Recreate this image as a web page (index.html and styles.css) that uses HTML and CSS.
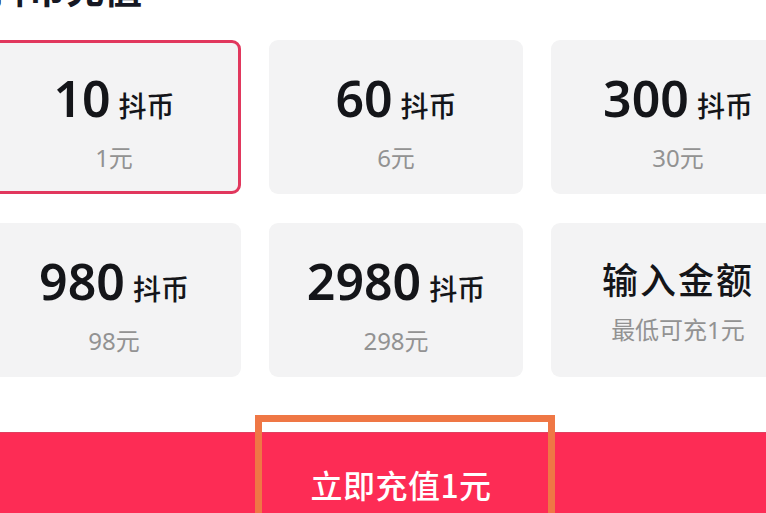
FILE: index.html
```html
<!DOCTYPE html>
<html lang="zh-CN">
<head>
<meta charset="utf-8">
<title>抖币充值</title>
<link rel="stylesheet" href="styles.css">
</head>
<body>
<div class="page">
  <h1 class="title">抖币充值</h1>
  <div class="grid">
    <div class="card selected">
      <div class="amount"><span class="num">10</span><span class="unit">抖币</span></div>
      <div class="price">1元</div>
    </div>
    <div class="card">
      <div class="amount"><span class="num">60</span><span class="unit">抖币</span></div>
      <div class="price">6元</div>
    </div>
    <div class="card">
      <div class="amount"><span class="num">300</span><span class="unit">抖币</span></div>
      <div class="price">30元</div>
    </div>
    <div class="card">
      <div class="amount"><span class="num">980</span><span class="unit">抖币</span></div>
      <div class="price">98元</div>
    </div>
    <div class="card">
      <div class="amount"><span class="num">2980</span><span class="unit">抖币</span></div>
      <div class="price">298元</div>
    </div>
    <div class="card custom">
      <div class="custom-title">输入金额</div>
      <div class="price">最低可充1元</div>
    </div>
  </div>
  <div class="pay-area">
    <button class="pay">立即充值1元</button>
    <div class="highlight"></div>
  </div>
</div>
</body>
</html>
```
FILE: styles.css
```css
html, body {
  margin: 0;
  padding: 0;
  background: #ffffff;
  overflow: hidden;
  height: 513px;
}
body {
  font-family: "Noto Sans", "Noto Sans CJK SC", sans-serif;
  color: #161823;
}
.page {
  width: 820px;
  margin-left: -13px;
}
.title {
  margin: -32px 0 0 0;
  padding-left: 3px;
  font-size: 38px;
  line-height: 38px;
  height: 38px;
  font-weight: 700;
  font-family: "Noto Sans CJK SC", sans-serif;
}
.grid {
  margin-top: 34px;
  display: grid;
  grid-template-columns: 254px 254px 254px;
  grid-auto-rows: 154px;
  column-gap: 28px;
  row-gap: 29px;
}
.card {
  box-sizing: border-box;
  background: #f3f3f4;
  border-radius: 9px;
  display: flex;
  flex-direction: column;
  align-items: center;
  justify-content: center;
  padding-top: 10px;
}
.card.selected {
  border: 3px solid #e1375d;
}
.amount {
  display: flex;
  align-items: baseline;
  line-height: 50px;
}
.num {
  font-size: 50px;
  font-weight: 600;
  color: #141519;
}
.unit {
  font-family: "Noto Sans CJK SC", sans-serif;
  font-size: 28px;
  font-weight: 500;
  margin-left: 8px;
  color: #141519;
}
.price {
  margin-top: 14px;
  font-size: 24px;
  line-height: 28px;
  color: #929292;
  font-family: "Noto Sans", "Noto Sans CJK SC", sans-serif;
}
.custom {
  padding-top: 0;
}
.custom-title {
  font-family: "Noto Sans CJK SC", sans-serif;
  font-size: 36px;
  font-weight: 500;
  line-height: 44px;
  letter-spacing: 2px;
  color: #141519;
}
.custom .price {
  margin-top: 16px;
}
.pay-area {
  position: relative;
  margin-top: 55px;
}
.pay {
  display: block;
  width: 100%;
  height: 100px;
  border: 0;
  border-top: 1px solid #e0405f;
  background: #fd2c55;
  color: #ffffff;
  font-family: "Noto Sans CJK SC", sans-serif;
  font-size: 32px;
  font-weight: 500;
  letter-spacing: 0.5px;
  padding: 2px 0 0 8px;
  margin: 0;
}
.highlight {
  position: absolute;
  left: 268px;
  top: -17px;
  width: 286px;
  height: 140px;
  border: 7px solid #ef7745;
}
```
